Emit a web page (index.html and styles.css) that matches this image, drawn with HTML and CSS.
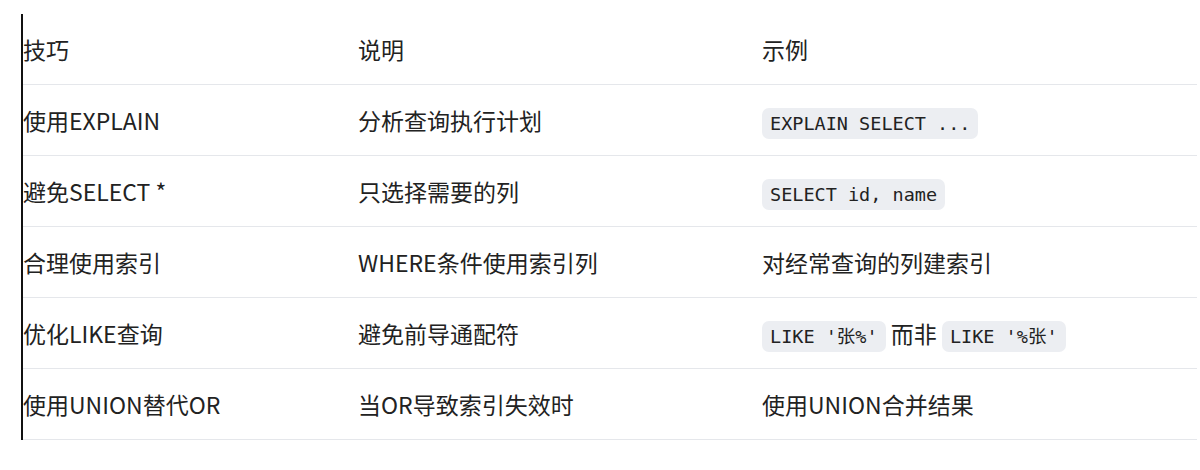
FILE: index.html
```html
<!DOCTYPE html>
<html lang="zh">
<head>
<meta charset="utf-8">
<link rel="stylesheet" href="styles.css">
</head>
<body>
<div class="wrap">
  <table class="tips">
    <colgroup>
      <col class="c1"><col class="c2"><col class="c3">
    </colgroup>
    <thead>
      <tr><th>技巧</th><th>说明</th><th>示例</th></tr>
    </thead>
    <tbody>
      <tr><td>使用EXPLAIN</td><td>分析查询执行计划</td><td><code>EXPLAIN SELECT ...</code></td></tr>
      <tr><td>避免SELECT *</td><td>只选择需要的列</td><td><code>SELECT id, name</code></td></tr>
      <tr><td>合理使用索引</td><td>WHERE条件使用索引列</td><td>对经常查询的列建索引</td></tr>
      <tr><td>优化LIKE查询</td><td>避免前导通配符</td><td><code>LIKE '张%'</code> 而非 <code>LIKE '%张'</code></td></tr>
      <tr><td>使用UNION替代OR</td><td>当OR导致索引失效时</td><td>使用UNION合并结果</td></tr>
    </tbody>
  </table>
</div>
</body>
</html>
```
FILE: styles.css
```css
html, body {
  margin: 0;
  padding: 0;
  background: #ffffff;
}
body {
  font-family: "Noto Sans CJK SC", "Noto Sans", sans-serif;
  color: #222222;
  font-size: 23px;
}
.wrap {
  margin: 14px 0 0 21px;
  width: 1174px;
  border-left: 2px solid #111111;
}
.tips {
  width: 100%;
  border-collapse: collapse;
  table-layout: fixed;
}
.c1 { width: 335px; }
.c2 { width: 404px; }
.tips th, .tips td {
  text-align: left;
  font-weight: 400;
  padding: 0;
  height: 70px;
  vertical-align: middle;
  border-bottom: 1px solid #e5e7eb;
  white-space: nowrap;
}
code {
  font-family: "DejaVu Sans Mono", "Noto Sans CJK SC", monospace;
  font-size: 18.5px;
  background: #eceef2;
  border-radius: 7px;
  padding: 5px 8px;
  color: #222222;
}
```
